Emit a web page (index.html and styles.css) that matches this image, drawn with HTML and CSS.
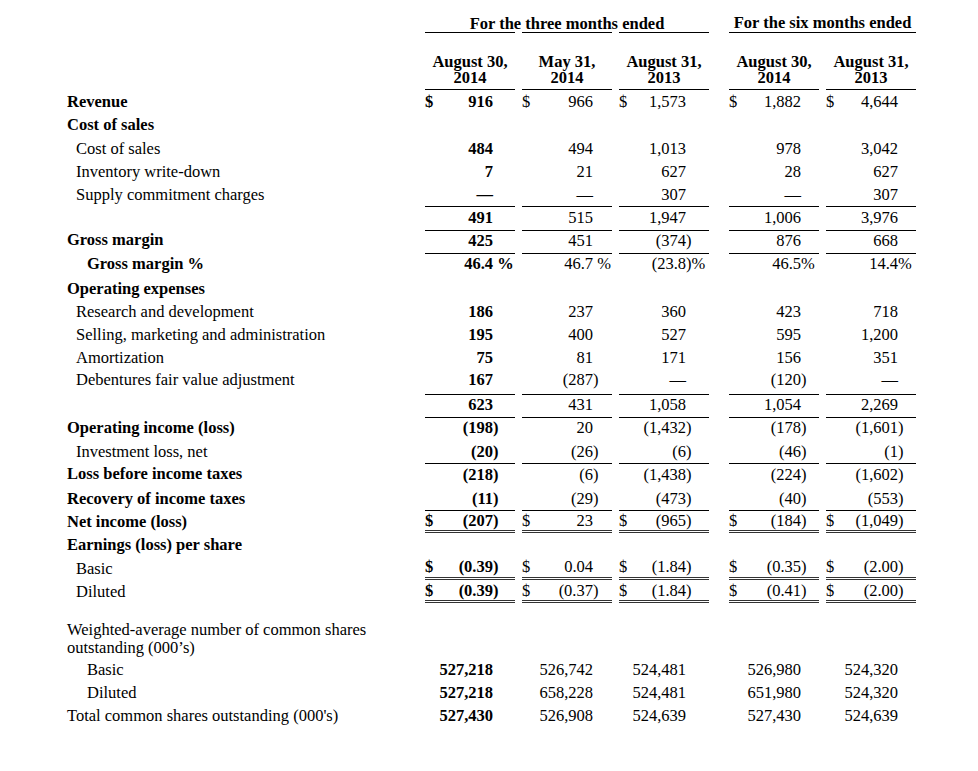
FILE: index.html
```html
<!DOCTYPE html>
<html lang="en">
<head>
<meta charset="utf-8">
<title>Statement of Operations</title>
<link rel="stylesheet" href="styles.css">
</head>
<body>
<table class="fin">
  <colgroup>
    <col class="w-label"><col class="w-num"><col class="w-num"><col class="w-num"><col class="w-sp"><col class="w-num"><col class="w-num">
  </colgroup>
  <tbody>
    <tr class="hA">
      <td></td>
      <td colspan="3" class="grp grp3">For the three months ended</td>
      <td></td>
      <td colspan="2" class="grp grp6">For the six months ended</td>
    </tr>
    <tr class="hB">
      <td></td>
      <td class="v dt"><div class="dl">August 30,</div><div class="dl">2014</div></td>
      <td class="v dt"><div class="dl">May 31,</div><div class="dl">2014</div></td>
      <td class="v dt"><div class="dl">August 31,</div><div class="dl">2013</div></td>
      <td></td>
      <td class="v dt"><div class="dl">August 30,</div><div class="dl">2014</div></td>
      <td class="v dt"><div class="dl">August 31,</div><div class="dl">2013</div></td>
    </tr>

    <tr class="r">
      <td class="lb b">Revenue</td>
      <td class="v c1 b"><div class="cell"><span>$</span><span class="n">916</span></div></td>
      <td class="v c2"><div class="cell"><span>$</span><span class="n">966</span></div></td>
      <td class="v c3"><div class="cell"><span>$</span><span class="n">1,573</span></div></td>
      <td></td>
      <td class="v c4"><div class="cell"><span>$</span><span class="n">1,882</span></div></td>
      <td class="v c5"><div class="cell"><span>$</span><span class="n">4,644</span></div></td>
    </tr>
    <tr class="r">
      <td class="lb b">Cost of sales</td>
      <td class="v"></td><td class="v"></td><td class="v"></td><td></td><td class="v"></td><td class="v"></td>
    </tr>
    <tr class="r">
      <td class="lb i1">Cost of sales</td>
      <td class="v c1 b"><div class="cell"><span class="n">484</span></div></td>
      <td class="v c2"><div class="cell"><span class="n">494</span></div></td>
      <td class="v c3"><div class="cell"><span class="n">1,013</span></div></td>
      <td></td>
      <td class="v c4"><div class="cell"><span class="n">978</span></div></td>
      <td class="v c5"><div class="cell"><span class="n">3,042</span></div></td>
    </tr>
    <tr class="r">
      <td class="lb i1">Inventory write-down</td>
      <td class="v c1 b"><div class="cell"><span class="n">7</span></div></td>
      <td class="v c2"><div class="cell"><span class="n">21</span></div></td>
      <td class="v c3"><div class="cell"><span class="n">627</span></div></td>
      <td></td>
      <td class="v c4"><div class="cell"><span class="n">28</span></div></td>
      <td class="v c5"><div class="cell"><span class="n">627</span></div></td>
    </tr>
    <tr class="r">
      <td class="lb i1">Supply commitment charges</td>
      <td class="v c1 b"><div class="cell"><span class="n">&mdash;</span></div></td>
      <td class="v c2"><div class="cell"><span class="n">&mdash;</span></div></td>
      <td class="v c3"><div class="cell"><span class="n">307</span></div></td>
      <td></td>
      <td class="v c4"><div class="cell"><span class="n">&mdash;</span></div></td>
      <td class="v c5"><div class="cell"><span class="n">307</span></div></td>
    </tr>
    <tr class="r bt">
      <td class="lb"></td>
      <td class="v c1 b"><div class="cell"><span class="n">491</span></div></td>
      <td class="v c2"><div class="cell"><span class="n">515</span></div></td>
      <td class="v c3"><div class="cell"><span class="n">1,947</span></div></td>
      <td></td>
      <td class="v c4"><div class="cell"><span class="n">1,006</span></div></td>
      <td class="v c5"><div class="cell"><span class="n">3,976</span></div></td>
    </tr>
    <tr class="r bt">
      <td class="lb b">Gross margin</td>
      <td class="v c1 b"><div class="cell"><span class="n">425</span></div></td>
      <td class="v c2"><div class="cell"><span class="n">451</span></div></td>
      <td class="v c3"><div class="cell"><span class="n">(374<span class="s">)</span></span></div></td>
      <td></td>
      <td class="v c4"><div class="cell"><span class="n">876</span></div></td>
      <td class="v c5"><div class="cell"><span class="n">668</span></div></td>
    </tr>
    <tr class="r bt">
      <td class="lb b i2">Gross margin %</td>
      <td class="v c1 b"><div class="cell"><span class="n">46.4<span class="s">&nbsp;%</span></span></div></td>
      <td class="v c2"><div class="cell"><span class="n">46.7<span class="s">&nbsp;%</span></span></div></td>
      <td class="v c3"><div class="cell"><span class="n">(23.8<span class="s">)%</span></span></div></td>
      <td></td>
      <td class="v c4"><div class="cell"><span class="n">46.5<span class="s">%</span></span></div></td>
      <td class="v c5"><div class="cell"><span class="n">14.4<span class="s">%</span></span></div></td>
    </tr>
    <tr class="r">
      <td class="lb b">Operating expenses</td>
      <td class="v"></td><td class="v"></td><td class="v"></td><td></td><td class="v"></td><td class="v"></td>
    </tr>
    <tr class="r">
      <td class="lb i1">Research and development</td>
      <td class="v c1 b"><div class="cell"><span class="n">186</span></div></td>
      <td class="v c2"><div class="cell"><span class="n">237</span></div></td>
      <td class="v c3"><div class="cell"><span class="n">360</span></div></td>
      <td></td>
      <td class="v c4"><div class="cell"><span class="n">423</span></div></td>
      <td class="v c5"><div class="cell"><span class="n">718</span></div></td>
    </tr>
    <tr class="r">
      <td class="lb i1">Selling, marketing and administration</td>
      <td class="v c1 b"><div class="cell"><span class="n">195</span></div></td>
      <td class="v c2"><div class="cell"><span class="n">400</span></div></td>
      <td class="v c3"><div class="cell"><span class="n">527</span></div></td>
      <td></td>
      <td class="v c4"><div class="cell"><span class="n">595</span></div></td>
      <td class="v c5"><div class="cell"><span class="n">1,200</span></div></td>
    </tr>
    <tr class="r">
      <td class="lb i1">Amortization</td>
      <td class="v c1 b"><div class="cell"><span class="n">75</span></div></td>
      <td class="v c2"><div class="cell"><span class="n">81</span></div></td>
      <td class="v c3"><div class="cell"><span class="n">171</span></div></td>
      <td></td>
      <td class="v c4"><div class="cell"><span class="n">156</span></div></td>
      <td class="v c5"><div class="cell"><span class="n">351</span></div></td>
    </tr>
    <tr class="r up">
      <td class="lb i1">Debentures fair value adjustment</td>
      <td class="v c1 b"><div class="cell"><span class="n">167</span></div></td>
      <td class="v c2"><div class="cell"><span class="n">(287<span class="s">)</span></span></div></td>
      <td class="v c3"><div class="cell"><span class="n">&mdash;</span></div></td>
      <td></td>
      <td class="v c4"><div class="cell"><span class="n">(120<span class="s">)</span></span></div></td>
      <td class="v c5"><div class="cell"><span class="n">&mdash;</span></div></td>
    </tr>
    <tr class="r bt">
      <td class="lb"></td>
      <td class="v c1 b"><div class="cell"><span class="n">623</span></div></td>
      <td class="v c2"><div class="cell"><span class="n">431</span></div></td>
      <td class="v c3"><div class="cell"><span class="n">1,058</span></div></td>
      <td></td>
      <td class="v c4"><div class="cell"><span class="n">1,054</span></div></td>
      <td class="v c5"><div class="cell"><span class="n">2,269</span></div></td>
    </tr>
    <tr class="r bt">
      <td class="lb b">Operating income (loss)</td>
      <td class="v c1 b"><div class="cell"><span class="n">(198<span class="s">)</span></span></div></td>
      <td class="v c2"><div class="cell"><span class="n">20</span></div></td>
      <td class="v c3"><div class="cell"><span class="n">(1,432<span class="s">)</span></span></div></td>
      <td></td>
      <td class="v c4"><div class="cell"><span class="n">(178<span class="s">)</span></span></div></td>
      <td class="v c5"><div class="cell"><span class="n">(1,601<span class="s">)</span></span></div></td>
    </tr>
    <tr class="r">
      <td class="lb i1">Investment loss, net</td>
      <td class="v c1 b"><div class="cell"><span class="n">(20<span class="s">)</span></span></div></td>
      <td class="v c2"><div class="cell"><span class="n">(26<span class="s">)</span></span></div></td>
      <td class="v c3"><div class="cell"><span class="n">(6<span class="s">)</span></span></div></td>
      <td></td>
      <td class="v c4"><div class="cell"><span class="n">(46<span class="s">)</span></span></div></td>
      <td class="v c5"><div class="cell"><span class="n">(1<span class="s">)</span></span></div></td>
    </tr>
    <tr class="r bt">
      <td class="lb b">Loss before income taxes</td>
      <td class="v c1 b"><div class="cell"><span class="n">(218<span class="s">)</span></span></div></td>
      <td class="v c2"><div class="cell"><span class="n">(6<span class="s">)</span></span></div></td>
      <td class="v c3"><div class="cell"><span class="n">(1,438<span class="s">)</span></span></div></td>
      <td></td>
      <td class="v c4"><div class="cell"><span class="n">(224<span class="s">)</span></span></div></td>
      <td class="v c5"><div class="cell"><span class="n">(1,602<span class="s">)</span></span></div></td>
    </tr>
    <tr class="r">
      <td class="lb b">Recovery of income taxes</td>
      <td class="v c1 b"><div class="cell"><span class="n">(11<span class="s">)</span></span></div></td>
      <td class="v c2"><div class="cell"><span class="n">(29<span class="s">)</span></span></div></td>
      <td class="v c3"><div class="cell"><span class="n">(473<span class="s">)</span></span></div></td>
      <td></td>
      <td class="v c4"><div class="cell"><span class="n">(40<span class="s">)</span></span></div></td>
      <td class="v c5"><div class="cell"><span class="n">(553<span class="s">)</span></span></div></td>
    </tr>
    <tr class="r bt2 dbl">
      <td class="lb b">Net income (loss)</td>
      <td class="v c1 b"><div class="cell"><span>$</span><span class="n">(207<span class="s">)</span></span></div></td>
      <td class="v c2"><div class="cell"><span>$</span><span class="n">23</span></div></td>
      <td class="v c3"><div class="cell"><span>$</span><span class="n">(965<span class="s">)</span></span></div></td>
      <td></td>
      <td class="v c4"><div class="cell"><span>$</span><span class="n">(184<span class="s">)</span></span></div></td>
      <td class="v c5"><div class="cell"><span>$</span><span class="n">(1,049<span class="s">)</span></span></div></td>
    </tr>
    <tr class="r">
      <td class="lb b">Earnings (loss) per share</td>
      <td class="v"></td><td class="v"></td><td class="v"></td><td></td><td class="v"></td><td class="v"></td>
    </tr>
    <tr class="r dbl">
      <td class="lb i1">Basic</td>
      <td class="v c1 b"><div class="cell"><span>$</span><span class="n">(0.39<span class="s">)</span></span></div></td>
      <td class="v c2"><div class="cell"><span>$</span><span class="n">0.04</span></div></td>
      <td class="v c3"><div class="cell"><span>$</span><span class="n">(1.84<span class="s">)</span></span></div></td>
      <td></td>
      <td class="v c4"><div class="cell"><span>$</span><span class="n">(0.35<span class="s">)</span></span></div></td>
      <td class="v c5"><div class="cell"><span>$</span><span class="n">(2.00<span class="s">)</span></span></div></td>
    </tr>
    <tr class="r dbl">
      <td class="lb i1">Diluted</td>
      <td class="v c1 b"><div class="cell"><span>$</span><span class="n">(0.39<span class="s">)</span></span></div></td>
      <td class="v c2"><div class="cell"><span>$</span><span class="n">(0.37<span class="s">)</span></span></div></td>
      <td class="v c3"><div class="cell"><span>$</span><span class="n">(1.84<span class="s">)</span></span></div></td>
      <td></td>
      <td class="v c4"><div class="cell"><span>$</span><span class="n">(0.41<span class="s">)</span></span></div></td>
      <td class="v c5"><div class="cell"><span>$</span><span class="n">(2.00<span class="s">)</span></span></div></td>
    </tr>
    <tr class="hw">
      <td class="lb"><div class="wl">Weighted-average number of common shares</div><div class="wl">outstanding (000&rsquo;s)</div></td>
      <td></td><td></td><td></td><td></td><td></td><td></td>
    </tr>
    <tr class="r">
      <td class="lb i2">Basic</td>
      <td class="v c1 b"><div class="cell"><span class="n">527,218</span></div></td>
      <td class="v c2"><div class="cell"><span class="n">526,742</span></div></td>
      <td class="v c3"><div class="cell"><span class="n">524,481</span></div></td>
      <td></td>
      <td class="v c4"><div class="cell"><span class="n">526,980</span></div></td>
      <td class="v c5"><div class="cell"><span class="n">524,320</span></div></td>
    </tr>
    <tr class="r">
      <td class="lb i2">Diluted</td>
      <td class="v c1 b"><div class="cell"><span class="n">527,218</span></div></td>
      <td class="v c2"><div class="cell"><span class="n">658,228</span></div></td>
      <td class="v c3"><div class="cell"><span class="n">524,481</span></div></td>
      <td></td>
      <td class="v c4"><div class="cell"><span class="n">651,980</span></div></td>
      <td class="v c5"><div class="cell"><span class="n">524,320</span></div></td>
    </tr>
    <tr class="r">
      <td class="lb">Total common shares outstanding (000's)</td>
      <td class="v c1 b"><div class="cell"><span class="n">527,430</span></div></td>
      <td class="v c2"><div class="cell"><span class="n">526,908</span></div></td>
      <td class="v c3"><div class="cell"><span class="n">524,639</span></div></td>
      <td></td>
      <td class="v c4"><div class="cell"><span class="n">527,430</span></div></td>
      <td class="v c5"><div class="cell"><span class="n">524,639</span></div></td>
    </tr>
  </tbody>
</table>
</body>
</html>
```

FILE: styles.css
```css
html, body {
  margin: 0;
  padding: 0;
  background: #ffffff;
}

body {
  font-family: "Liberation Serif", "Times New Roman", serif;
  font-size: 16.5px;
  color: #000;
}

.fin {
  border-collapse: separate;
  border-spacing: 7px 0;
  table-layout: fixed;
  width: 863px;
  margin-left: 60px;
}

.w-label { width: 351px; }
.w-num { width: 90px; }
.w-sp { width: 6px; }

.fin td {
  padding: 0;
  line-height: 19px;
  vertical-align: middle;
  white-space: nowrap;
}

/* header rows */
.hA { height: 33px; }
.hA td { vertical-align: bottom; }
.grp {
  font-weight: bold;
  text-align: center;
}
.grp3 {
  padding-bottom: 1px;
  background: linear-gradient(to right, #000 0 90px, transparent 90px 97px, #000 97px 187px, transparent 187px 194px, #000 194px 100%) left bottom / 100% 1px no-repeat;
}
.grp6 {
  border-bottom: 1px solid #000;
}

.hB { height: 57px; }
.hB td { vertical-align: bottom; }
.dt {
  font-weight: bold;
  text-align: center;
  padding-bottom: 4px !important;
  border-bottom: 1px solid #000;
}
.dl {
  height: 15.5px;
  line-height: 15.5px;
}

/* body rows */
.r { height: 23.3px; }
.lb { text-align: left; }
.b { font-weight: bold; }
.i1 { padding-left: 9px !important; }
.i2 { padding-left: 20px !important; }

.cell {
  display: flex;
  align-items: baseline;
}
.n {
  margin-left: auto;
  white-space: nowrap;
}
.s {
  display: inline-block;
  width: 0;
  white-space: nowrap;
}

.c1 .cell { padding-right: 22px; }
.c2 .cell { padding-right: 19px; }
.c3 .cell { padding-right: 23px; }
.c4 .cell { padding-right: 18px; }
.c5 .cell { padding-right: 18px; }

.bt td { padding-bottom: 3px; }
.bt td.v { border-top: 1px solid #000; }
.bt2 td.v { border-top: 1px solid #000; }
.dbl td.v { border-bottom: 3px double #333; }
.up td { padding-bottom: 5px; }

.hw { height: 54.4px; }
.hw td {
  vertical-align: bottom;
  padding-bottom: 1px;
}
.wl {
  height: 18px;
  line-height: 18px;
}
```
